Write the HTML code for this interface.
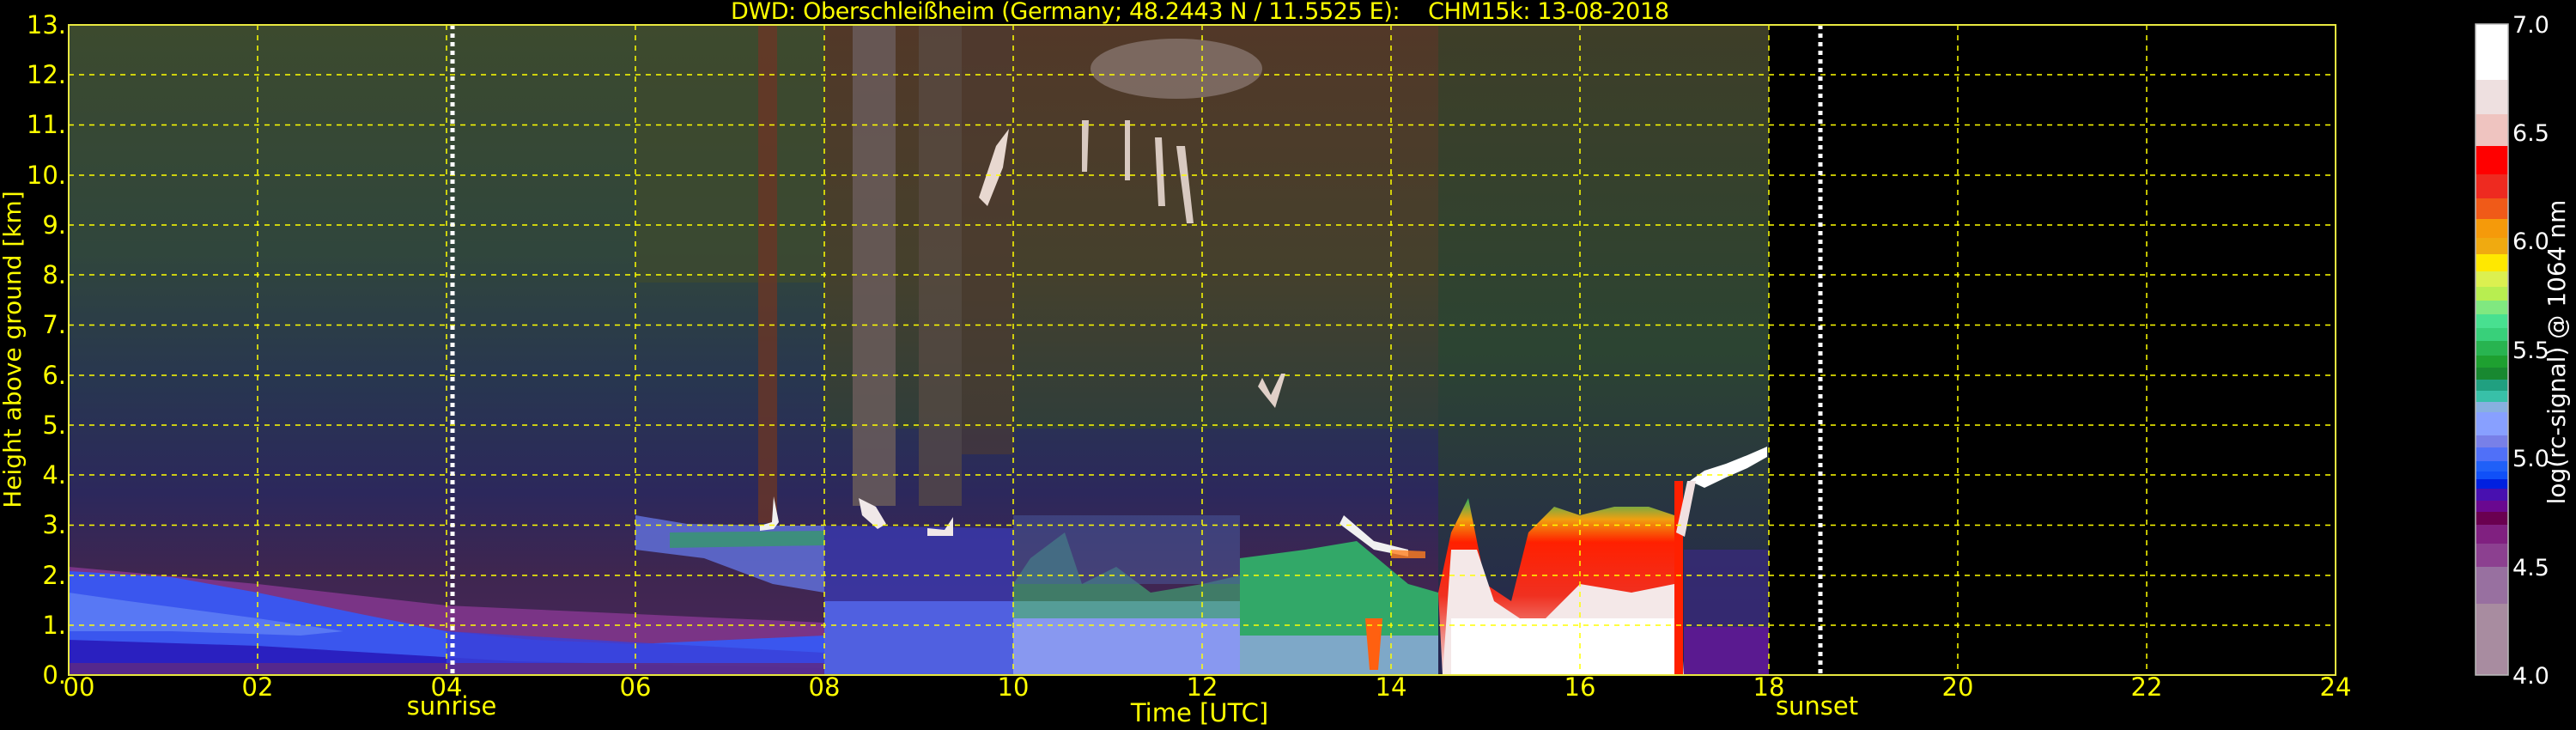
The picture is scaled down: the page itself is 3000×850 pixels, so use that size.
<!DOCTYPE html>
<html><head><meta charset="utf-8"><style>
html,body{margin:0;padding:0;background:#000;width:3000px;height:850px;overflow:hidden}
svg{display:block}
text{font-family:"DejaVu Sans","Liberation Sans",sans-serif}
</style></head><body>
<svg width="3000" height="850" viewBox="0 0 3000 850" xmlns="http://www.w3.org/2000/svg">
<defs>
<linearGradient id="bg" x1="0" y1="0" x2="0" y2="1">
<stop offset="0" stop-color="#3c4a2e"/>
<stop offset="0.35" stop-color="#30463c"/>
<stop offset="0.55" stop-color="#283650"/>
<stop offset="0.72" stop-color="#2c285c"/>
<stop offset="0.84" stop-color="#3e2650"/>
<stop offset="1" stop-color="#4a265a"/>
</linearGradient>
<linearGradient id="mid" x1="0" y1="0" x2="0" y2="1">
<stop offset="0" stop-color="#523828"/>
<stop offset="0.6" stop-color="#45402c"/>
<stop offset="1" stop-color="#303e3a"/>
</linearGradient>
<linearGradient id="right" x1="0" y1="0" x2="0" y2="1">
<stop offset="0" stop-color="#3e3e28"/>
<stop offset="0.5" stop-color="#2c4432"/>
<stop offset="1" stop-color="#242452"/>
</linearGradient>
<linearGradient id="redtop" x1="0" y1="0" x2="0" y2="1">
<stop offset="0" stop-color="#30b060"/>
<stop offset="0.12" stop-color="#f0a010"/>
<stop offset="0.25" stop-color="#ff2000"/>
<stop offset="0.55" stop-color="#f03020"/>
<stop offset="1" stop-color="#f0e0e0"/>
</linearGradient>
</defs>

<rect x="80" y="29" width="1980" height="757" fill="url(#bg)"/>
<rect x="960" y="29" width="715" height="470" fill="url(#mid)"/>
<rect x="1675" y="29" width="385" height="757" fill="url(#right)"/>
<rect x="740" y="29" width="220" height="300" fill="#3e4a2e" opacity="0.7"/>
<rect x="883" y="29" width="22" height="580" fill="#6a3626" opacity="0.8"/>
<rect x="993" y="29" width="50" height="560" fill="#6a5c5a" opacity="0.85"/>
<rect x="1070" y="29" width="50" height="560" fill="#5a4c44" opacity="0.7"/>
<rect x="1120" y="29" width="60" height="500" fill="#4e3a30" opacity="0.6"/>
<ellipse cx="1370" cy="80" rx="100" ry="35" fill="#8a7872" opacity="0.75"/>
<path d="M1140,230 L1160,170 L1175,150 L1168,195 L1150,240Z" fill="#e8d8d0"/>
<path d="M1260,140 l8,0 l-2,60 l-6,0z M1310,140 l6,0 l0,70 l-6,0z M1345,160 l8,0 l4,80 l-8,0z M1370,170 l10,0 l10,90 l-8,0z" fill="#e8d8d0" opacity="0.9"/>
<path d="M1470,440 l10,20 l12,-25 l5,0 l-12,40 l-20,-25z" fill="#e0d0c8"/>

<!-- lower layers 00-08 -->
<path d="M80,660 L300,680 L520,705 L740,715 L960,725 L960,786 L80,786Z" fill="#7a3486"/>
<path d="M80,665 L200,672 L300,690 L420,715 L520,735 L620,745 L740,750 L960,740 L960,786 L80,786Z" fill="#3a56ee"/>
<path d="M80,690 L150,700 L300,720 L400,735 L350,740 L200,735 L80,735Z" fill="#5878f4"/>
<path d="M80,745 L300,752 L600,770 L960,778 L960,786 L80,786Z" fill="#2a20c0"/>
<path d="M520,735 L740,748 L960,760 L960,786 L520,786Z" fill="#3a40d8" opacity="0.8"/>
<rect x="80" y="772" width="980" height="14" fill="#602a80" opacity="0.8"/>
<path d="M740,600 L800,610 L905,612 L960,612 L960,690 L900,680 L820,650 L740,640Z" fill="#6070d8" opacity="0.85"/>
<path d="M780,620 L960,618 L960,635 L780,638Z" fill="#30a060" opacity="0.7"/>
<path d="M960,612 L1180,615 L1180,786 L960,786Z" fill="#3a3ab0" opacity="0.8"/>
<path d="M960,700 L1180,700 L1180,786 L960,786Z" fill="#5060e0"/>
<path d="M1180,700 L1444,700 L1444,786 L1180,786Z" fill="#8898f0"/>
<path d="M1180,680 L1200,650 L1240,620 L1260,680 L1300,660 L1340,690 L1400,680 L1444,670 L1444,720 L1180,720Z" fill="#40a070" opacity="0.7"/>
<path d="M1180,600 L1444,600 L1444,680 L1180,680Z" fill="#4a5ca0" opacity="0.5"/>
<path d="M1444,650 L1520,640 L1580,630 L1640,680 L1675,690 L1675,786 L1444,786Z" fill="#32a868"/>
<path d="M1444,740 L1675,740 L1675,786 L1444,786Z" fill="#7ea8c8"/>
<path d="M1590,720 L1610,720 L1605,780 L1595,780Z" fill="#ff6010"/>
<path d="M1675,690 L1690,620 L1710,580 L1730,680 L1760,700 L1780,620 L1810,590 L1840,600 L1880,590 L1920,590 L1950,600 L1961,786 L1680,786Z" fill="url(#redtop)"/>
<path d="M1690,640 L1720,640 L1740,700 L1770,720 L1800,720 L1840,680 L1900,690 L1950,680 L1955,786 L1680,786Z" fill="#f4e8e8"/>
<path d="M1690,720 L1960,720 L1960,786 L1690,786Z" fill="#ffffff"/>
<rect x="1950" y="560" width="10" height="226" fill="#ff2000"/>
<path d="M1961,730 L2060,730 L2060,786 L1961,786Z" fill="#5a1a90"/>
<path d="M1961,640 L2060,640 L2060,730 L1961,730Z" fill="#3a2a80" opacity="0.7"/>
<path d="M1968,560 L1985,548 L2010,540 L2035,530 L2058,520 L2058,532 L2035,545 L2010,556 L1985,568Z" fill="#ffffff"/>
<path d="M1952,620 L1965,560 L1975,560 L1962,625Z" fill="#f0e0e0"/>
<path d="M885,612 l14,-4 l2,-30 l6,30 l-6,8 l-16,2z" fill="#f0f0f0"/>
<path d="M1000,580 l20,10 l12,20 l-10,6 l-18,-16z" fill="#f0e8e8"/>
<path d="M1080,615 l20,2 l10,-15 l0,22 l-30,0z" fill="#f0e8e8"/>
<path d="M1565,600 L1600,630 L1640,640 L1640,648 L1600,640 L1560,610Z" fill="#f0f0f0"/>
<path d="M1620,640 l40,2 l0,8 l-40,0z" fill="#ff8020" opacity="0.8"/>

<rect x="2060" y="29" width="660" height="757" fill="#000"/>

<g stroke="#ffff00" stroke-width="1.5" stroke-dasharray="6,6" fill="none">
<path d="M80,728H2720M80,670H2720M80,611.5H2720M80,553H2720M80,495H2720M80,437H2720M80,378.5H2720M80,320H2720M80,262H2720M80,204H2720M80,145.5H2720M80,87H2720"/>
<path d="M300,29V786M520,29V786M740,29V786M960,29V786M1180,29V786M1400,29V786M1620,29V786M1840,29V786M2060,29V786M2280,29V786M2500,29V786"/>
</g>
<g stroke="#ffffff" stroke-width="5" stroke-dasharray="5,5">
<path d="M527,29V786M2120,29V786"/>
</g>
<rect x="80" y="29" width="2640" height="757" fill="none" stroke="#e8e840" stroke-width="2"/>

<text x="851" y="22" font-size="27" fill="#ffff00" textLength="1093" xml:space="preserve">DWD: Oberschleißheim (Germany; 48.2443 N / 11.5525 E):    CHM15k: 13-08-2018</text>

<g font-size="29" fill="#ffff00" text-anchor="end">
<text x="77" y="796">0.</text><text x="77" y="738">1.</text><text x="77" y="680">2.</text><text x="77" y="621">3.</text>
<text x="77" y="563">4.</text><text x="77" y="505">5.</text><text x="77" y="447">6.</text><text x="77" y="388">7.</text>
<text x="77" y="330">8.</text><text x="77" y="272">9.</text><text x="77" y="214">10.</text><text x="77" y="155">11.</text>
<text x="77" y="97">12.</text><text x="77" y="39">13.</text>
</g>
<text transform="translate(24,407) rotate(-90)" font-size="28" fill="#ffff00" text-anchor="middle">Height above ground [km]</text>

<g font-size="29" fill="#ffff00" text-anchor="middle">
<text x="92" y="810">00</text><text x="300" y="810">02</text><text x="520" y="810">04</text><text x="740" y="810">06</text>
<text x="960" y="810">08</text><text x="1180" y="810">10</text><text x="1400" y="810">12</text><text x="1620" y="810">14</text>
<text x="1840" y="810">16</text><text x="2060" y="810">18</text><text x="2280" y="810">20</text><text x="2500" y="810">22</text>
<text x="2720" y="810">24</text>
<text x="526" y="832">sunrise</text><text x="2116" y="832">sunset</text>
<text x="1397" y="840">Time [UTC]</text>
</g>

<g>
<rect x="2883" y="28" width="38" height="65" fill="#ffffff"/>
<rect x="2883" y="93" width="38" height="40" fill="#eee0e0"/>
<rect x="2883" y="133" width="38" height="37" fill="#efc4c0"/>
<rect x="2883" y="170" width="38" height="33" fill="#ff0000"/>
<rect x="2883" y="203" width="38" height="28" fill="#ee2a20"/>
<rect x="2883" y="231" width="38" height="24" fill="#f05a18"/>
<rect x="2883" y="255" width="38" height="22" fill="#f59a0a"/>
<rect x="2883" y="277" width="38" height="19" fill="#f0aa10"/>
<rect x="2883" y="296" width="38" height="20" fill="#ffe800"/>
<rect x="2883" y="316" width="38" height="18" fill="#dcf050"/>
<rect x="2883" y="334" width="38" height="16" fill="#b8ee50"/>
<rect x="2883" y="350" width="38" height="16" fill="#80e880"/>
<rect x="2883" y="366" width="38" height="16" fill="#48e090"/>
<rect x="2883" y="382" width="38" height="15" fill="#38d07a"/>
<rect x="2883" y="397" width="38" height="17" fill="#28b450"/>
<rect x="2883" y="414" width="38" height="14" fill="#1ea030"/>
<rect x="2883" y="428" width="38" height="14" fill="#188830"/>
<rect x="2883" y="442" width="38" height="13" fill="#20a080"/>
<rect x="2883" y="455" width="38" height="13" fill="#38c0a8"/>
<rect x="2883" y="468" width="38" height="12" fill="#88b0e0"/>
<rect x="2883" y="480" width="38" height="27" fill="#88a0ff"/>
<rect x="2883" y="507" width="38" height="14" fill="#7880e8"/>
<rect x="2883" y="521" width="38" height="16" fill="#5070f8"/>
<rect x="2883" y="537" width="38" height="12" fill="#2060f8"/>
<rect x="2883" y="549" width="38" height="9" fill="#1050f8"/>
<rect x="2883" y="558" width="38" height="11" fill="#0020e0"/>
<rect x="2883" y="569" width="38" height="14" fill="#4810b0"/>
<rect x="2883" y="583" width="38" height="13" fill="#6a0890"/>
<rect x="2883" y="596" width="38" height="15" fill="#6a0050"/>
<rect x="2883" y="611" width="38" height="22" fill="#802080"/>
<rect x="2883" y="633" width="38" height="27" fill="#8c4090"/>
<rect x="2883" y="660" width="38" height="43" fill="#9870a0"/>
<rect x="2883" y="703" width="38" height="83" fill="#a88ca0"/>
<rect x="2883" y="28" width="38" height="758" fill="none" stroke="#bbbbbb" stroke-width="1.5"/>
</g>
<g font-size="27" fill="#ffffff">
<text x="2926" y="38">7.0</text><text x="2926" y="164">6.5</text><text x="2926" y="290">6.0</text>
<text x="2926" y="417">5.5</text><text x="2926" y="543">5.0</text><text x="2926" y="670">4.5</text><text x="2926" y="796">4.0</text>
</g>
<text transform="translate(2987,410) rotate(-90)" font-size="28" fill="#ffffff" text-anchor="middle">log(rc-signal) @ 1064 nm</text>
</svg>
</body></html>
